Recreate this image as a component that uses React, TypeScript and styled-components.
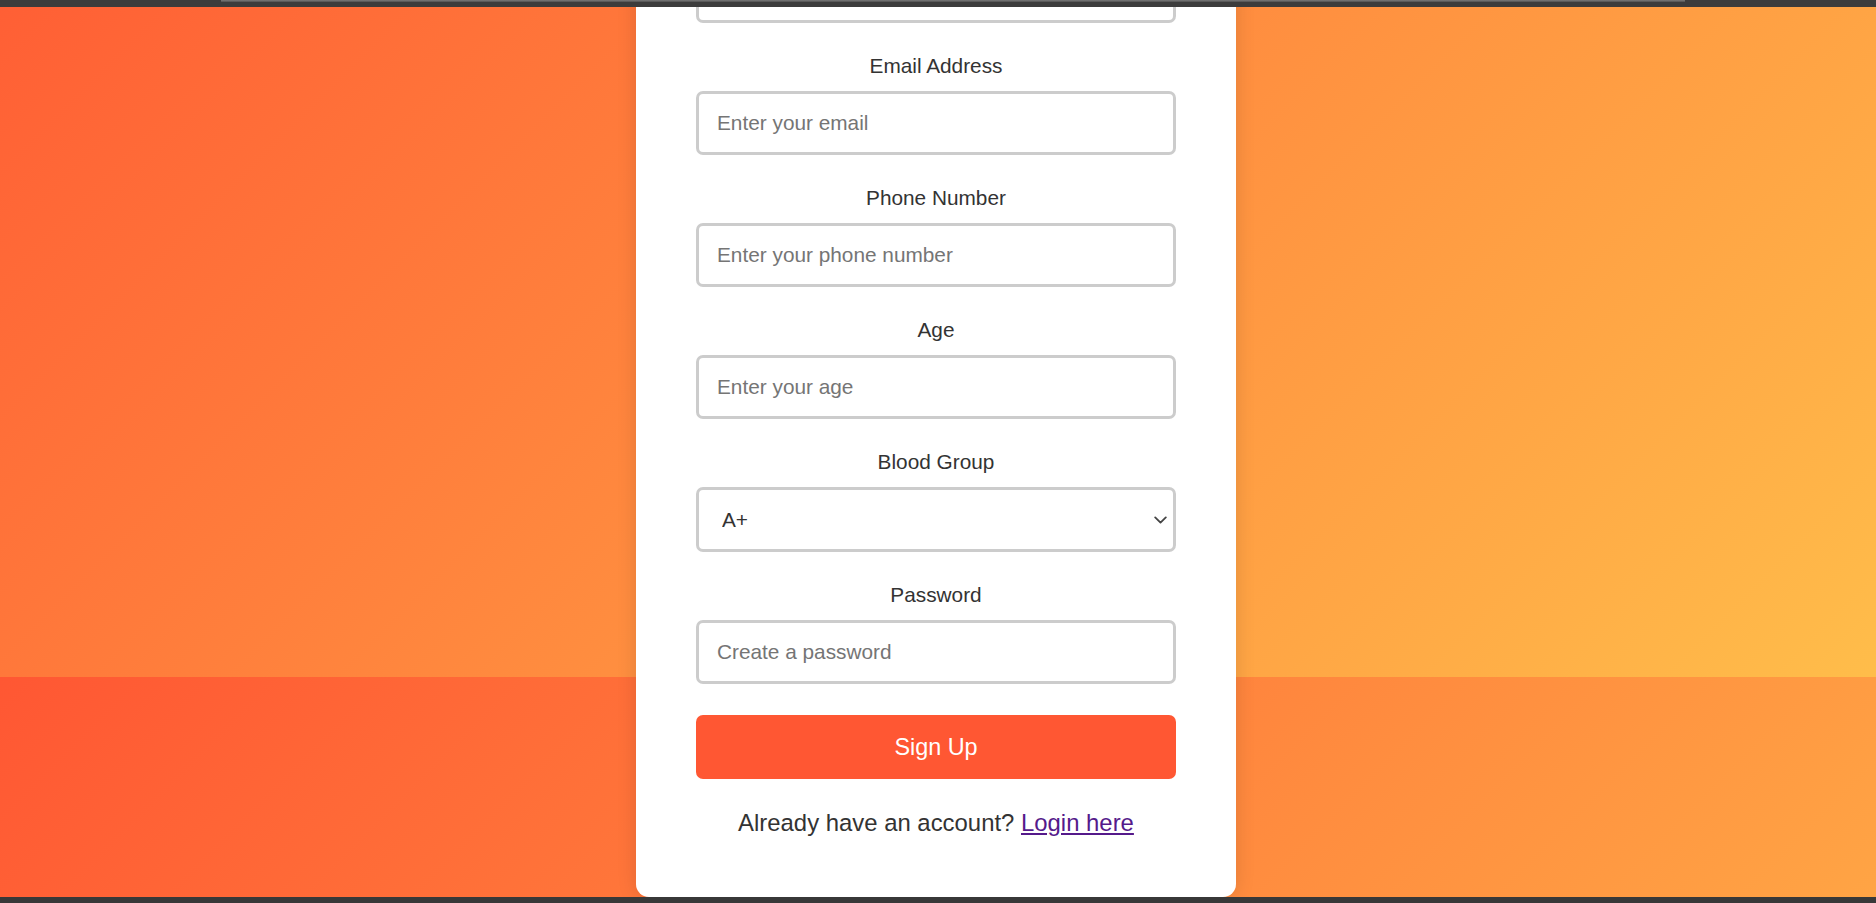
import React from "react";
import styled, { createGlobalStyle } from "styled-components";

const GlobalStyle = createGlobalStyle`
  html, body {
    margin: 0;
    padding: 0;
  }
  body {
    font-family: "Liberation Sans", Arial, sans-serif;
    background: #383838;
  }
  * {
    box-sizing: border-box;
  }
`;

const Page = styled.div`
  display: flex;
  flex-direction: column;
  height: 903px;
  overflow: hidden;
`;

const TopBar = styled.div`
  flex-shrink: 0;
  height: 7px;
  background: #3c3c3c;
  padding: 0 191px 0 221px;
`;

const TopBarHighlight = styled.div`
  height: 2px;
  background: linear-gradient(#7a7a7a, #505050);
`;

const BottomBar = styled.div`
  flex-shrink: 0;
  height: 6px;
  background: #383838;
`;

const Stage = styled.main`
  flex: 1;
  min-height: 0;
  overflow: hidden;
  display: flex;
  flex-direction: column;
  justify-content: flex-end;
  align-items: center;
  padding-right: 4px;
  background-image: linear-gradient(135deg, #ff5733, #ffbd4a);
  background-size: 100% 890px;
  background-position: 0 -220px;
  background-repeat: repeat-y;
`;

const Card = styled.form`
  flex-shrink: 0;
  width: 600px;
  padding: 60px;
  background: #fff;
  border-radius: 13px;
  box-shadow: 0 0 20px rgba(0, 0, 0, 0.12);
  text-align: center;
`;

const Heading = styled.h2`
  margin: 0 0 31px;
  font-size: 31px;
  color: #333;
`;

const Field = styled.div`
  margin-bottom: 31px;
`;

const Label = styled.label`
  display: block;
  font-size: 20.8px;
  line-height: 24px;
  margin-bottom: 13px;
  color: #333;
`;

const TextInput = styled.input`
  display: block;
  width: 100%;
  height: 64px;
  padding: 0 18px;
  border: 3px solid #ccc;
  border-radius: 7px;
  background: #fff;
  font-family: "Liberation Sans", Arial, sans-serif;
  font-size: 20.8px;
  color: #333;
  outline: none;

  &::placeholder {
    color: #757575;
  }
`;

const SelectWrap = styled.div`
  position: relative;
`;

const Select = styled.select`
  display: block;
  width: 100%;
  height: 65px;
  padding: 0 30px 0 23px;
  border: 3px solid #ccc;
  border-radius: 7px;
  background: #fff;
  appearance: none;
  font-family: "Liberation Sans", Arial, sans-serif;
  font-size: 20.8px;
  color: #333;
  outline: none;
`;

const Chevron = styled.svg`
  position: absolute;
  right: 9px;
  top: 50%;
  transform: translateY(-50%);
  pointer-events: none;
`;

const SubmitButton = styled.button`
  display: block;
  width: 100%;
  height: 64px;
  border: none;
  border-radius: 7px;
  background: #ff5733;
  color: #fff;
  font-family: "Liberation Sans", Arial, sans-serif;
  font-size: 23.4px;
  cursor: pointer;
`;

const Footer = styled.p`
  margin: 30px 0 0;
  font-size: 23.9px;
  line-height: normal;
  color: #333;
`;

const LoginLink = styled.a`
  color: #551a8b;
  text-decoration: underline;
`;

type FieldDef = { id: string; label: string; type: string; placeholder: string };

const fieldsBefore: FieldDef[] = [
  { id: "name", label: "Full Name", type: "text", placeholder: "Enter your full name" },
  { id: "email", label: "Email Address", type: "email", placeholder: "Enter your email" },
  { id: "phone", label: "Phone Number", type: "tel", placeholder: "Enter your phone number" },
  { id: "age", label: "Age", type: "number", placeholder: "Enter your age" },
];

const bloodGroups = ["A+", "A-", "B+", "B-", "AB+", "AB-", "O+", "O-"];

export default function App() {
  return (
    <>
      <GlobalStyle />
      <Page>
        <TopBar>
          <TopBarHighlight />
        </TopBar>
        <Stage>
          <Card onSubmit={(e) => e.preventDefault()}>
            <Heading>Create an Account</Heading>
            {fieldsBefore.map((f) => (
              <Field key={f.id}>
                <Label htmlFor={f.id}>{f.label}</Label>
                <TextInput id={f.id} type={f.type} placeholder={f.placeholder} />
              </Field>
            ))}
            <Field>
              <Label htmlFor="blood">Blood Group</Label>
              <SelectWrap>
                <Select id="blood" defaultValue="A+">
                  {bloodGroups.map((g) => (
                    <option key={g} value={g}>
                      {g}
                    </option>
                  ))}
                </Select>
                <Chevron width="13" height="8" viewBox="0 0 13 8" fill="none">
                  <path d="M1.2 1.4l5.3 5.2 5.3-5.2" stroke="#444" strokeWidth="1.8" strokeLinecap="round" strokeLinejoin="round" />
                </Chevron>
              </SelectWrap>
            </Field>
            <Field>
              <Label htmlFor="password">Password</Label>
              <TextInput id="password" type="password" placeholder="Create a password" />
            </Field>
            <SubmitButton type="submit">Sign Up</SubmitButton>
            <Footer>
              Already have an account? <LoginLink href="#login">Login here</LoginLink>
            </Footer>
          </Card>
        </Stage>
        <BottomBar />
      </Page>
    </>
  );
}
